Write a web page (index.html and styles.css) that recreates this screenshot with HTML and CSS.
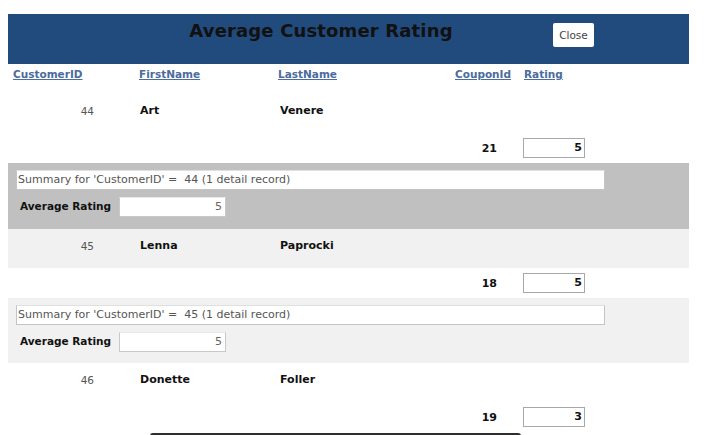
FILE: index.html
```html
<!DOCTYPE html>
<html>
<head>
<meta charset="utf-8">
<link rel="stylesheet" href="styles.css">
</head>
<body>
<div class="report">
  <div class="titlebar">
    <h1 class="title">Average Customer Rating</h1>
    <button class="close">Close</button>
  </div>
  <div class="colheads">
    <a class="ch">CustomerID</a>
    <a class="ch">FirstName</a>
    <a class="ch">LastName</a>
    <a class="ch">CouponId</a>
    <a class="ch">Rating</a>
  </div>

  <div class="group">
    <div class="cust">
      <span class="cid">44</span><span class="fn">Art</span><span class="ln">Venere</span>
    </div>
    <div class="coupon">
      <span class="cpn">21</span><span class="rbox">5</span>
    </div>
    <div class="summary dark">
      <div class="sumtext">Summary for 'CustomerID' = &nbsp;44 (1 detail record)</div>
      <div class="avgrow"><span class="avglabel">Average Rating</span><span class="avgbox">5</span></div>
    </div>
  </div>

  <div class="group alt">
    <div class="cust">
      <span class="cid">45</span><span class="fn">Lenna</span><span class="ln">Paprocki</span>
    </div>
    <div class="coupon">
      <span class="cpn">18</span><span class="rbox">5</span>
    </div>
    <div class="summary light">
      <div class="sumtext">Summary for 'CustomerID' = &nbsp;45 (1 detail record)</div>
      <div class="avgrow"><span class="avglabel">Average Rating</span><span class="avgbox">5</span></div>
    </div>
  </div>

  <div class="group">
    <div class="cust">
      <span class="cid">46</span><span class="fn">Donette</span><span class="ln">Foller</span>
    </div>
    <div class="coupon">
      <span class="cpn">19</span><span class="rbox">3</span>
    </div>
  </div>
</div>
<div class="scrollbar"></div>
</body>
</html>
```

FILE: styles.css
```css
html, body {
  margin: 0;
  padding: 0;
  background: #fff;
  overflow: hidden;
  height: 435px;
}
body {
  font-family: "DejaVu Sans", "Liberation Sans", sans-serif;
  color: #111;
}
.report {
  margin: 14px 0 0 8px;
  width: 681px;
}
.titlebar {
  height: 50px;
  background: #214a7d;
  display: grid;
  grid-template-columns: 626px 1fr;
  grid-template-rows: 50px;
}
.title {
  grid-column: 1;
  grid-row: 1;
  margin: 0;
  padding-top: 6px;
  text-align: center;
  font-size: 18px;
  font-weight: bold;
  color: #111;
  letter-spacing: 0.15px;
}
.close {
  grid-column: 1;
  grid-row: 1;
  justify-self: end;
  align-self: start;
  margin: 9px 40px 0 0;
  width: 41px;
  height: 24px;
  padding: 0;
  background: #fff;
  border: none;
  border-radius: 2px;
  font-family: "DejaVu Sans", sans-serif;
  font-size: 10.5px;
  color: #444;
}
.colheads {
  height: 30px;
  box-sizing: border-box;
  display: grid;
  grid-template-columns: 126px 139px 177px 69px 1fr;
  padding: 4px 0 0 5px;
  align-items: start;
}
.ch {
  font-size: 10.5px;
  font-weight: bold;
  color: #4a6c9e;
  text-decoration: underline;
}
.cust {
  height: 39px;
  display: flex;
  align-items: flex-start;
  padding-top: 10px;
  box-sizing: border-box;
  font-size: 11px;
}
.group.alt .cust {
  background: #f1f1f1;
}
.cid {
  width: 86px;
  text-align: right;
  color: #555;
  font-size: 10.5px;
  padding-top: 1px;
}
.fn {
  margin-left: 46px;
  width: 140px;
  font-weight: bold;
}
.ln {
  font-weight: bold;
}
.coupon {
  height: 30px;
  display: flex;
  align-items: center;
  font-size: 11px;
  font-weight: bold;
}
.cpn {
  width: 489px;
  text-align: right;
}
.rbox {
  margin-left: 26px;
  width: 62px;
  height: 20px;
  box-sizing: border-box;
  border: 1px solid #a8a8a8;
  text-align: right;
  padding-right: 2px;
  line-height: 18px;
}
.summary {
  height: 65px;
  padding: 7px 0 0 8px;
  box-sizing: border-box;
}
.summary.dark {
  background: #c0c0c0;
  height: 66px;
}
.summary.light {
  background: #f1f1f1;
}
.sumtext {
  width: 589px;
  height: 20px;
  box-sizing: border-box;
  background: #fff;
  border: 1px solid #c4c4c4;
  border-top-color: #e0e0e0;
  font-size: 11px;
  color: #555;
  line-height: 18px;
  padding-left: 1px;
  white-space: pre;
}
.avgrow {
  display: flex;
  align-items: center;
  margin-top: 7px;
  padding-left: 4px;
}
.avglabel {
  width: 99px;
  font-size: 10.5px;
  font-weight: bold;
  color: #111;
  margin-top: -3px;
}
.avgbox {
  width: 107px;
  height: 20px;
  box-sizing: border-box;
  background: #fff;
  border: 1px solid #c8c8c8;
  border-top-color: #e8e8e8;
  text-align: right;
  padding-right: 3px;
  font-size: 11px;
  color: #666;
  line-height: 18px;
}
.scrollbar {
  position: absolute;
  left: 150px;
  top: 433px;
  width: 371px;
  height: 6px;
  border-radius: 4px;
  background: #2e2e2e;
}
```
